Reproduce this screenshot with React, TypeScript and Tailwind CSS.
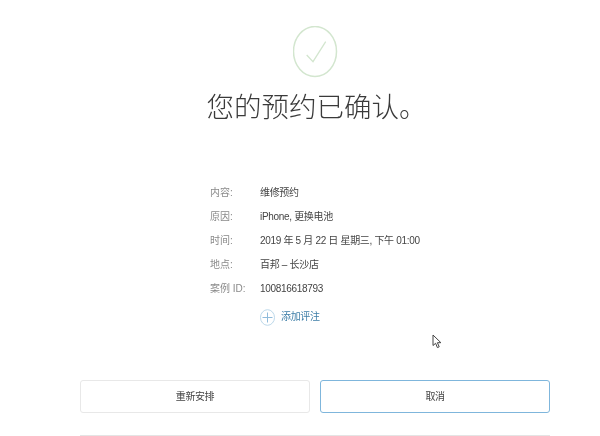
const rows = [
  { label: "内容:", value: "维修预约" },
  { label: "原因:", value: "iPhone, 更换电池" },
  { label: "时间:", value: "2019 年 5 月 22 日 星期三, 下午 01:00" },
  { label: "地点:", value: "百邦 – 长沙店" },
  { label: "案例 ID:", value: "100816618793" },
];

export default function App() {
  return (
    <div className="relative w-[600px] h-[436px] overflow-hidden bg-white blur-[0.4px] font-['Liberation_Sans','Noto_Sans_CJK_SC',sans-serif]">
      <div className="flex flex-col items-center pt-[26px] pl-[30px]">
        {/* Check mark */}
        <svg width="46" height="53" viewBox="0 0 46 53" fill="none" className="ml-[2px] text-[#d3e6cf]">
          <ellipse cx="22" cy="25.5" rx="21.5" ry="25" stroke="currentColor" strokeWidth="1.5" />
          <path d="M13.7 29 L20 35.7 L32.7 15.7" stroke="currentColor" strokeWidth="1.3" />
        </svg>
        <h1 className="mt-[11px] ml-[3px] text-[27.5px] leading-[36px] font-light text-[#3a3a3a] whitespace-nowrap">
          您的预约已确认。
        </h1>
      </div>

      {/* Details */}
      <div className="flex flex-col mt-[55px] pl-[210px] text-[10px] tracking-[-0.32px] leading-[24px]">
        {rows.map((row) => (
          <div key={row.label} className="flex">
            <span className="w-[50px] text-[#8a8a8a] tracking-normal">{row.label}</span>
            <span className="text-[#444]">{row.value}</span>
          </div>
        ))}
        <div className="flex items-center gap-[6px] ml-[50px] mt-[4px] text-[#3f7fa8]">
          <svg width="15" height="17" viewBox="0 0 15 17" fill="none" className="text-[#bcd8ea]">
            <ellipse cx="7.5" cy="8.5" rx="7" ry="7.8" stroke="currentColor" />
            <path d="M7.5 3.5V13.5M2.5 8.5H12.5" stroke="#8fbbdb" />
          </svg>
          <span>添加评注</span>
        </div>
      </div>

      {/* Buttons */}
      <div className="flex gap-[10px] mt-[51px] pl-[80px] pr-[50px] text-[10px] tracking-[-0.4px] text-[#444]">
        <button className="flex-1 h-[33px] rounded-[3px] border border-[#e8e8e8] bg-white">重新安排</button>
        <button className="flex-1 h-[33px] rounded-[3px] border border-[#7fb6dc] bg-white">取消</button>
      </div>
      <div className="mt-[22px] ml-[80px] mr-[50px] h-px bg-[#e4e4e4]" />

      {/* Mouse cursor */}
      <svg width="10" height="15" viewBox="0 0 10 15" fill="#fff" className="absolute left-[432px] top-[334px]">
        <path d="M1 1V11.5L3.6 9.3L5.4 13.6L7.2 12.8L5.4 8.7H8.9Z" stroke="#444" strokeWidth="1" />
      </svg>
    </div>
  );
}
